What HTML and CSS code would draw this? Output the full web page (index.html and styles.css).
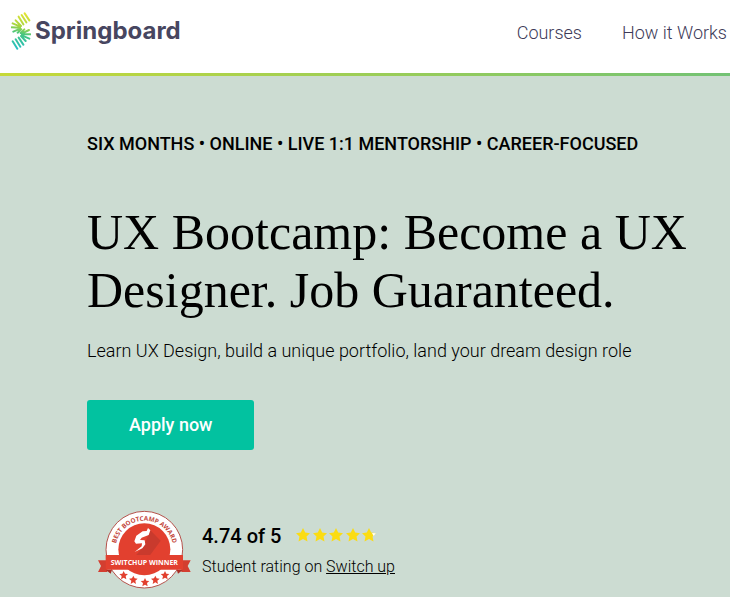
FILE: index.html
```html
<!DOCTYPE html>
<html lang="en">
<head>
<meta charset="utf-8">
<meta name="viewport" content="width=device-width, initial-scale=1">
<title>UX Bootcamp | Springboard</title>
<link rel="stylesheet" href="styles.css">
</head>
<body>
<header class="site-header">
  <a class="logo" href="#">
    <svg class="logo-mark" viewBox="0 0 60 114" aria-hidden="true">
      <defs>
        <linearGradient id="mark" gradientUnits="userSpaceOnUse" x1="45" y1="0" x2="20" y2="112">
          <stop offset="0" stop-color="#e9e532"/>
          <stop offset=".4" stop-color="#a5d540"/>
          <stop offset=".6" stop-color="#43c583"/>
          <stop offset="1" stop-color="#25bfc4"/>
        </linearGradient>
      </defs>
      <g fill="none" stroke="url(#mark)" stroke-width="6" stroke-linecap="round">
        <path d="M41 4L55 25M32 9L46 31M23 14L37 37M14 25L30 42M5 34L28 44M2 46L27 47M7 59L28 50M20 62L31 52"/>
        <path d="M40 52L29 63M54 54L32 65M58 67L33 67M55 80L32 70M44 87L30 72M23 77L37 98M14 82L28 104M5 88L19 110"/>
      </g>
    </svg>
    <span class="logo-name">Springboard</span>
  </a>
  <nav class="site-nav">
    <a href="#">Courses</a>
    <a href="#">How it Works</a>
  </nav>
</header>
<main class="hero">
  <p class="eyebrow">SIX MONTHS • ONLINE • LIVE 1:1 MENTORSHIP • CAREER-FOCUSED</p>
  <h1>UX Bootcamp: Become a UX Designer. Job Guaranteed.</h1>
  <p class="lead">Learn UX Design, build a unique portfolio, land your dream design role</p>
  <button class="apply" type="button">Apply now</button>
  <section class="rating">
    <svg class="badge" viewBox="24 30 279 240" role="img" aria-label="Best Bootcamp Award, SwitchUp Winner">
      <defs>
        <path id="arc" d="M76 149A87 87 0 0 1 250 149"/>
        <path id="star" d="M0-13L4-5L13-4L6 2L8 12L0 7L-8 12L-6 2L-13-4L-4-5Z"/>
        <clipPath id="disc"><circle cx="163" cy="149" r="77"/></clipPath>
      </defs>
      <circle cx="163" cy="149" r="115" fill="#fff" stroke="#b5534c" stroke-width="3"/>
      <circle cx="163" cy="148" r="78" fill="#e2402f"/>
      <path clip-path="url(#disc)" d="M181 91L212 122L180 166H138L160 140Z" fill="#c93a2d"/>
      <text class="badge-arc"><textPath href="#arc" startOffset="50%" text-anchor="middle">BEST BOOTCAMP AWARD</textPath></text>
      <path d="M174 84L181 91L176 105L155 113L150 120L164 121L166 133L157 145L134 156L155 139L156 130L138 131L133 124L139 107L158 94L170 93Z" fill="#fff"/>
      <path d="M24 181H52V216H24L33 198ZM302 181H274V216H302L293 198Z" fill="#d33e30"/>
      <path d="M47 209H66L62 221ZM279 209H260L264 221Z" fill="#a92d24"/>
      <path d="M47 165H279V209H47Z" fill="#e2402f"/>
      <text class="badge-ribbon" x="163" y="194" text-anchor="middle">SWITCHUP WINNER</text>
      <g fill="#e2402f">
        <use href="#star" x="101" y="226"/><use href="#star" x="130" y="240"/><use href="#star" x="165" y="247"/><use href="#star" x="196" y="240"/><use href="#star" x="225" y="226"/>
      </g>
    </svg>
    <div class="rating-text">
      <div class="score">
        <strong>4.74 of 5</strong>
        <svg class="stars" viewBox="0 0 82 16" role="img" aria-label="4.74 stars">
          <defs><path id="s" d="M0-7L2.2-2.4L7-1.8L3.5 1.6L4.5 6.5L0 4.1L-4.5 6.5L-3.5 1.6L-7-1.8L-2.2-2.4Z"/></defs>
          <g fill="#fbdc12"><use href="#s" x="8" y="7"/><use href="#s" x="25" y="7"/><use href="#s" x="41" y="7"/><use href="#s" x="58" y="7"/><use href="#s" x="74" y="7"/></g>
          <path d="M77 5L81 5.2L78.5 8Z" fill="#fff"/>
        </svg>
      </div>
      <p class="source">Student rating on <a href="#">Switch up</a></p>
    </div>
  </section>
</main>
</body>
</html>
```

FILE: styles.css
```css
* { box-sizing: border-box; }
body {
  margin: 0;
  min-height: 100vh;
  background: #ccdcd2;
  color: #000;
  font-family: Roboto, "Liberation Sans", sans-serif;
  font-weight: 300;
}
h1, p { margin: 0; }
.site-header {
  display: flex;
  align-items: flex-start;
  justify-content: space-between;
  height: 76px;
  padding: 12px 3px 0 11px;
  background: #fff;
  border-bottom: 3px solid;
  border-image: linear-gradient(90deg, #c6d938, #72c274) 1;
}
.logo {
  display: flex;
  gap: 4px;
  color: #474660;
  text-decoration: none;
}
.logo-mark { width: 20px; height: 38px; }
.logo-name {
  font: 700 24px/38px Inter, sans-serif;
}
.site-nav {
  display: flex;
  gap: 40px;
  font-size: 18px;
  line-height: 42px;
}
.site-nav a {
  color: #3d3a58;
  text-decoration: none;
  white-space: nowrap;
}
.hero {
  max-width: 760px;
  padding: 56px 24px 8px 87px;
}
.eyebrow {
  font-size: 18px;
  font-weight: 500;
  line-height: 24px;
}
h1 {
  margin-top: 47px;
  font: 400 50px/58px "Liberation Serif", serif;
}
.lead {
  margin-top: 20px;
  font-size: 18px;
  line-height: 24px;
}
.apply {
  display: block;
  margin-top: 37px;
  padding: 0 42px;
  border: 0;
  border-radius: 3px;
  background: #02c2a0;
  color: #fff;
  font: 500 18px/50px Roboto, sans-serif;
}
.rating {
  display: flex;
  gap: 11px;
  margin-top: 60px;
  padding-left: 11px;
}
.badge { width: 93px; height: 80px; }
.badge-arc { font: 700 19px "Open Sans", sans-serif; fill: #c3473c; }
.badge-ribbon { font: 700 21px "Open Sans", sans-serif; fill: #fff; }
.rating-text { padding-top: 12px; }
.score {
  display: flex;
  align-items: center;
  gap: 14px;
  font-size: 20px;
  line-height: 28px;
}
.score strong { font-weight: 500; }
.stars { width: 82px; height: 16px; }
.source {
  margin-top: 5px;
  font-size: 16px;
  line-height: 24px;
}
.source a { color: inherit; }
```
